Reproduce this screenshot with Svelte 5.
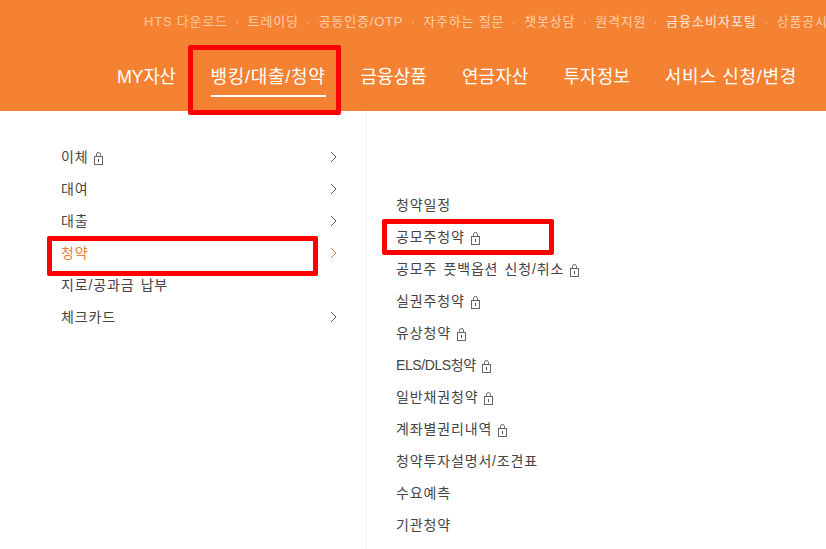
<script>
  const util = ['HTS 다운로드','트레이딩','공동인증/OTP','자주하는 질문','챗봇상담','원격지원','금융소비자포털','상품공시실'];
  const nav = ['MY자산','뱅킹/대출/청약','금융상품','연금자산','투자정보','서비스 신청/변경'];
  const left = [
    { t:'이체', lock:true, arrow:true },
    { t:'대여', arrow:true },
    { t:'대출', arrow:true },
    { t:'청약', arrow:true, active:true },
    { t:'지로/공과금 납부' },
    { t:'체크카드', arrow:true }
  ];
  const right = [
    { t:'청약일정' },
    { t:'공모주청약', lock:true, mark:true },
    { t:'공모주 풋백옵션 신청/취소', lock:true },
    { t:'실권주청약', lock:true },
    { t:'유상청약', lock:true },
    { t:'ELS/DLS청약', lock:true, tight:true },
    { t:'일반채권청약', lock:true },
    { t:'계좌별권리내역', lock:true },
    { t:'청약투자설명서/조견표' },
    { t:'수요예측' },
    { t:'기관청약' }
  ];
</script>

{#snippet lock()}
  <svg class="lock" width="11" height="13" viewBox="0 0 11 13" fill="none" stroke="#666" stroke-width="1">
    <rect x="1.5" y="4.5" width="8" height="8"/>
    <path d="M3.5 4.5V2.5a2 2 0 0 1 4 0V4.5"/>
    <path d="M5.5 7v3" stroke="#555"/>
  </svg>
{/snippet}

<div class="page">
  <header>
    <ul class="util">
      {#each util as u, i}
        {#if i > 0}<li class="dot">·</li>{/if}
        <li class:bold={i === 6} class:dim={i === 0}>{u}</li>
      {/each}
    </ul>
    <nav>
      {#each nav as n, i}
        <a class:current={i === 1} class:slash={i === 1 || i === 5} class:latin={i === 0}>{n}</a>
      {/each}
    </nav>
    <div class="mark mark-nav"></div>
  </header>
  <main>
    <ul class="col-left">
      {#each left as r}
        <li class:active={r.active}>
          <span>{r.t}</span>
          {#if r.lock}{@render lock()}{/if}
          {#if r.arrow}
            <svg class="arrow" width="7" height="12" viewBox="0 0 7 12" fill="none" stroke="currentColor" stroke-width="1"><path d="M1 1l5 5-5 5"/></svg>
          {/if}
          {#if r.active}<div class="mark mark-left"></div>{/if}
        </li>
      {/each}
    </ul>
    <ul class="col-right">
      {#each right as r}
        <li class:tight={r.tight}>
          <span>{r.t}</span>
          {#if r.lock}{@render lock()}{/if}
          {#if r.mark}<div class="mark mark-right"></div>{/if}
        </li>
      {/each}
    </ul>
  </main>
</div>

<style>
  :global(body) { margin: 0; background: #fff; }
  ul { list-style: none; margin: 0; padding: 0; }
  .page {
    width: 826px; height: 549px; overflow: hidden; position: relative;
    font-family: "Liberation Sans", "Noto Sans CJK KR", sans-serif;
  }
  header { height: 111px; background: #f58233; position: relative; z-index: 1; }
  .util {
    display: flex; white-space: nowrap; padding: 13px 0 0 144px; overflow: hidden;
    font-size: 13px; line-height: 18px; color: #fbd0aa; letter-spacing: 0.8px;
  }
  .util .dim { color: #fbc79c; }
  .util .dot { margin: 0 7.4px; color: #fbc79c; }
  .util .bold { font-weight: 500; color: #fcdcc0; letter-spacing: 1px; }
  nav {
    display: flex; gap: 35px; padding: 31px 0 0 117px; white-space: nowrap;
    font-size: 18px; line-height: 30px; color: #fff; font-weight: 400;
    letter-spacing: 0.05px;
  }
  nav a { display: block; }
  nav a.slash { letter-spacing: 0.7px; }
  nav a.latin { letter-spacing: -0.4px; }
  nav a.current { border-bottom: 2px solid #fff; box-sizing: border-box; height: 35px; }
  main { display: flex; height: 438px; }
  .col-left {
    width: 367px; box-sizing: border-box; border-right: 1px solid #eee;
    padding: 30px 29px 0 61px;
  }
  .col-right { padding: 78px 0 0 29px; }
  li { position: relative; }
  main li {
    height: 32px; line-height: 32px; font-size: 14px; color: #444;
    display: flex; align-items: center; letter-spacing: 0.85px; word-spacing: 1.5px; white-space: nowrap;
  }
  main li.tight { letter-spacing: -0.4px; }
  .col-left .active { color: #e8803c; }
  .lock { margin-left: 5px; margin-top: 2px; flex: none; }
  .arrow { margin-left: auto; color: #555; }
  .active .arrow { color: #e8803c; }
  .mark { position: absolute; border: 5px solid #f00; border-radius: 2px; box-sizing: border-box; pointer-events: none; }
  .mark-nav { left: 188px; top: 45px; width: 153px; height: 70px; }
  .mark-left { left: -14px; top: -1px; width: 271px; height: 40px; }
  .mark-right { left: -14px; top: -2px; width: 172px; height: 36px; }
</style>
